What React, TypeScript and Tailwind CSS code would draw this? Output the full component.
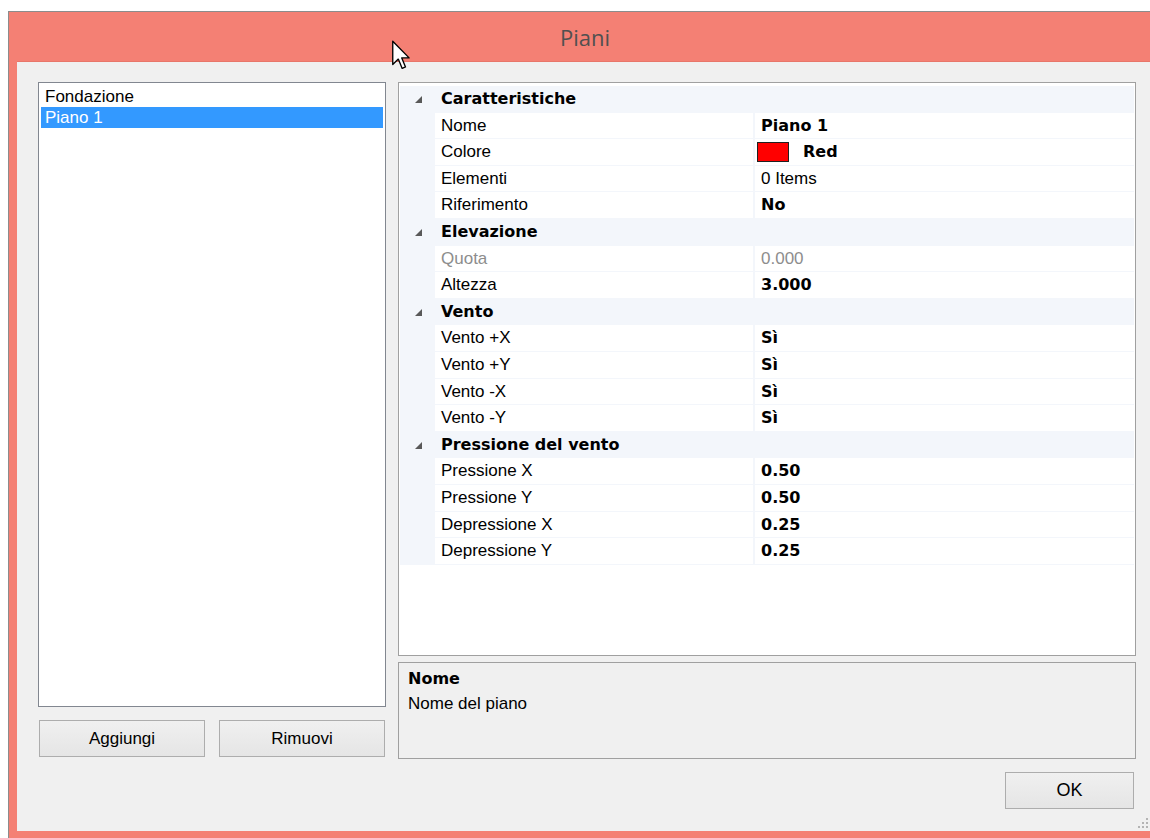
import React from 'react';

type Prop = {
  name: string;
  value: string;
  bold?: boolean;
  disabled?: boolean;
  swatch?: string;
};

type Section = {
  title: string;
  rows: Prop[];
};

const sections: Section[] = [
  {
    title: 'Caratteristiche',
    rows: [
      { name: 'Nome', value: 'Piano 1', bold: true },
      { name: 'Colore', value: 'Red', bold: true, swatch: '#ff0000' },
      { name: 'Elementi', value: '0 Items' },
      { name: 'Riferimento', value: 'No', bold: true },
    ],
  },
  {
    title: 'Elevazione',
    rows: [
      { name: 'Quota', value: '0.000', disabled: true },
      { name: 'Altezza', value: '3.000', bold: true },
    ],
  },
  {
    title: 'Vento',
    rows: [
      { name: 'Vento +X', value: 'Sì', bold: true },
      { name: 'Vento +Y', value: 'Sì', bold: true },
      { name: 'Vento -X', value: 'Sì', bold: true },
      { name: 'Vento -Y', value: 'Sì', bold: true },
    ],
  },
  {
    title: 'Pressione del vento',
    rows: [
      { name: 'Pressione X', value: '0.50', bold: true },
      { name: 'Pressione Y', value: '0.50', bold: true },
      { name: 'Depressione X', value: '0.25', bold: true },
      { name: 'Depressione Y', value: '0.25', bold: true },
    ],
  },
];

const font = { fontFamily: '"Liberation Sans", Arial, sans-serif' };
// heavier, wider face for the bold labels and values
const boldFont = { fontFamily: '"DejaVu Sans", "Liberation Sans", sans-serif' };

const Expander = () => (
  <svg width="9" height="9" viewBox="0 0 9 9" className="block">
    <polygon points="8,1 8,8 1,8" fill="#595959" />
  </svg>
);

const Cursor = () => (
  <svg
    width="18"
    height="31"
    viewBox="0 0 12 20"
    className="absolute left-[392px] top-[40px] pointer-events-none"
  >
    <path
      d="M0.5 0.5 L0.5 16 L4.2 12.4 L6.8 18.6 L9 17.6 L6.5 11.6 L11.4 11.6 Z"
      fill="#ffffff"
      stroke="#000000"
      strokeWidth="0.9"
      strokeLinejoin="round"
    />
  </svg>
);

const Button = ({ label, className }: { label: string; className: string }) => (
  <div
    className={`flex items-center justify-center border border-[#adadad] bg-gradient-to-b from-[#f0f0f0] to-[#e5e5e5] text-[17px] text-black ${className}`}
  >
    {label}
  </div>
);

const Bold = ({ children }: { children: React.ReactNode }) => (
  <span className="text-[16px] font-bold text-black" style={boldFont}>
    {children}
  </span>
);

const PropertyGrid = () => (
  <div className="h-[574px] border border-[#a0a0a0] bg-white pt-[3px] pl-px pr-px">
    {sections.map((section) => (
      <div key={section.title}>
        {/* Category header */}
        <div className="flex h-[26.6px] items-center bg-[#f3f6fb]">
          <div className="flex w-[35px] justify-center pl-[2px]">
            <Expander />
          </div>
          <span className="pl-[6px]">
            <Bold>{section.title}</Bold>
          </span>
        </div>

        {/* Property rows */}
        {section.rows.map((row) => (
          <div key={row.name} className="flex h-[26.6px] bg-[#f3f6fb]">
            <div className="w-[35px] shrink-0" />
            <div
              className={`mb-px flex w-[318px] shrink-0 items-center bg-white pl-[6px] text-[17px] ${
                row.disabled ? 'text-[#8d8d8d]' : 'text-black'
              }`}
            >
              {row.name}
            </div>
            <div className="mb-px ml-[2px] flex flex-1 items-center bg-white pl-[2px] text-[17px]">
              {row.swatch && (
                <span className="mr-[14px] inline-block h-[20px] w-[32px] border border-[#202020] bg-[#ff0000]" />
              )}
              <span className={row.swatch ? '' : 'pl-[4px]'}>
                {row.bold ? (
                  <Bold>{row.value}</Bold>
                ) : (
                  <span className={row.disabled ? 'text-[#8d8d8d]' : 'text-black'}>{row.value}</span>
                )}
              </span>
            </div>
          </div>
        ))}
      </div>
    ))}
  </div>
);

const ResizeGrip = () => (
  <svg width="12" height="12" viewBox="0 0 12 12" className="absolute right-[1px] bottom-[2px]">
    {[
      [9, 1],
      [5, 5],
      [9, 5],
      [1, 9],
      [5, 9],
      [9, 9],
    ].map(([x, y]) => (
      <rect key={`${x}-${y}`} x={x} y={y} width="2" height="2" fill="#b4b4b4" />
    ))}
  </svg>
);

export default function App() {
  return (
    <div className="relative h-[838px] w-[1150px] overflow-hidden bg-white pt-[11px] pl-[8px]" style={font}>
      <div className="flex h-[835px] flex-col border-t border-l border-[#8c8c8c] bg-[#f48074] pl-[8px]">
        {/* Title bar */}
        <div className="flex h-[49px] shrink-0 items-center justify-center pl-[3px] pt-[1px]">
          <span
            className="text-[22px] text-[#505050]"
            style={{ fontFamily: '"Open Sans", "Noto Sans", sans-serif' }}
          >
            Piani
          </span>
        </div>

        {/* Client area */}
        <div className="relative flex h-[770px] shrink-0 flex-col border-t border-[#e8766a] bg-[#f0f0f0] pt-[20px] pl-[21px] pr-[14px]">
          <div className="flex gap-[12px]">
            {/* Floor list */}
            <div className="flex w-[348px] flex-col">
              <div className="h-[625px] border border-[#828790] bg-white p-[2px] pt-[3px] text-[17px]">
                <div className="flex h-[21px] items-center pl-[4px] pt-px text-black">Fondazione</div>
                <div className="flex h-[21px] items-center bg-[#3399ff] pl-[4px] pt-px text-white">Piano 1</div>
              </div>
              <div className="mt-[13px] flex gap-[14px] pl-px">
                <Button label="Aggiungi" className="h-[37px] w-[166px]" />
                <Button label="Rimuovi" className="h-[37px] w-[166px]" />
              </div>
            </div>

            {/* Properties */}
            <div className="flex w-[738px] flex-col">
              <PropertyGrid />
              <div className="mt-[6px] h-[97px] border border-[#a0a0a0] bg-[#f0f0f0] px-[9px] pt-[5px] text-[17px] text-black">
                <div className="leading-[22px]">
                  <Bold>Nome</Bold>
                </div>
                <div className="mt-[3px] leading-[22px]">Nome del piano</div>
              </div>
            </div>
          </div>

          <div className="mt-[13px] flex justify-end pr-[2px]">
            <Button label="OK" className="h-[37px] w-[129px] text-[18px]" />
          </div>

          <ResizeGrip />
        </div>
      </div>

      <Cursor />
    </div>
  );
}
